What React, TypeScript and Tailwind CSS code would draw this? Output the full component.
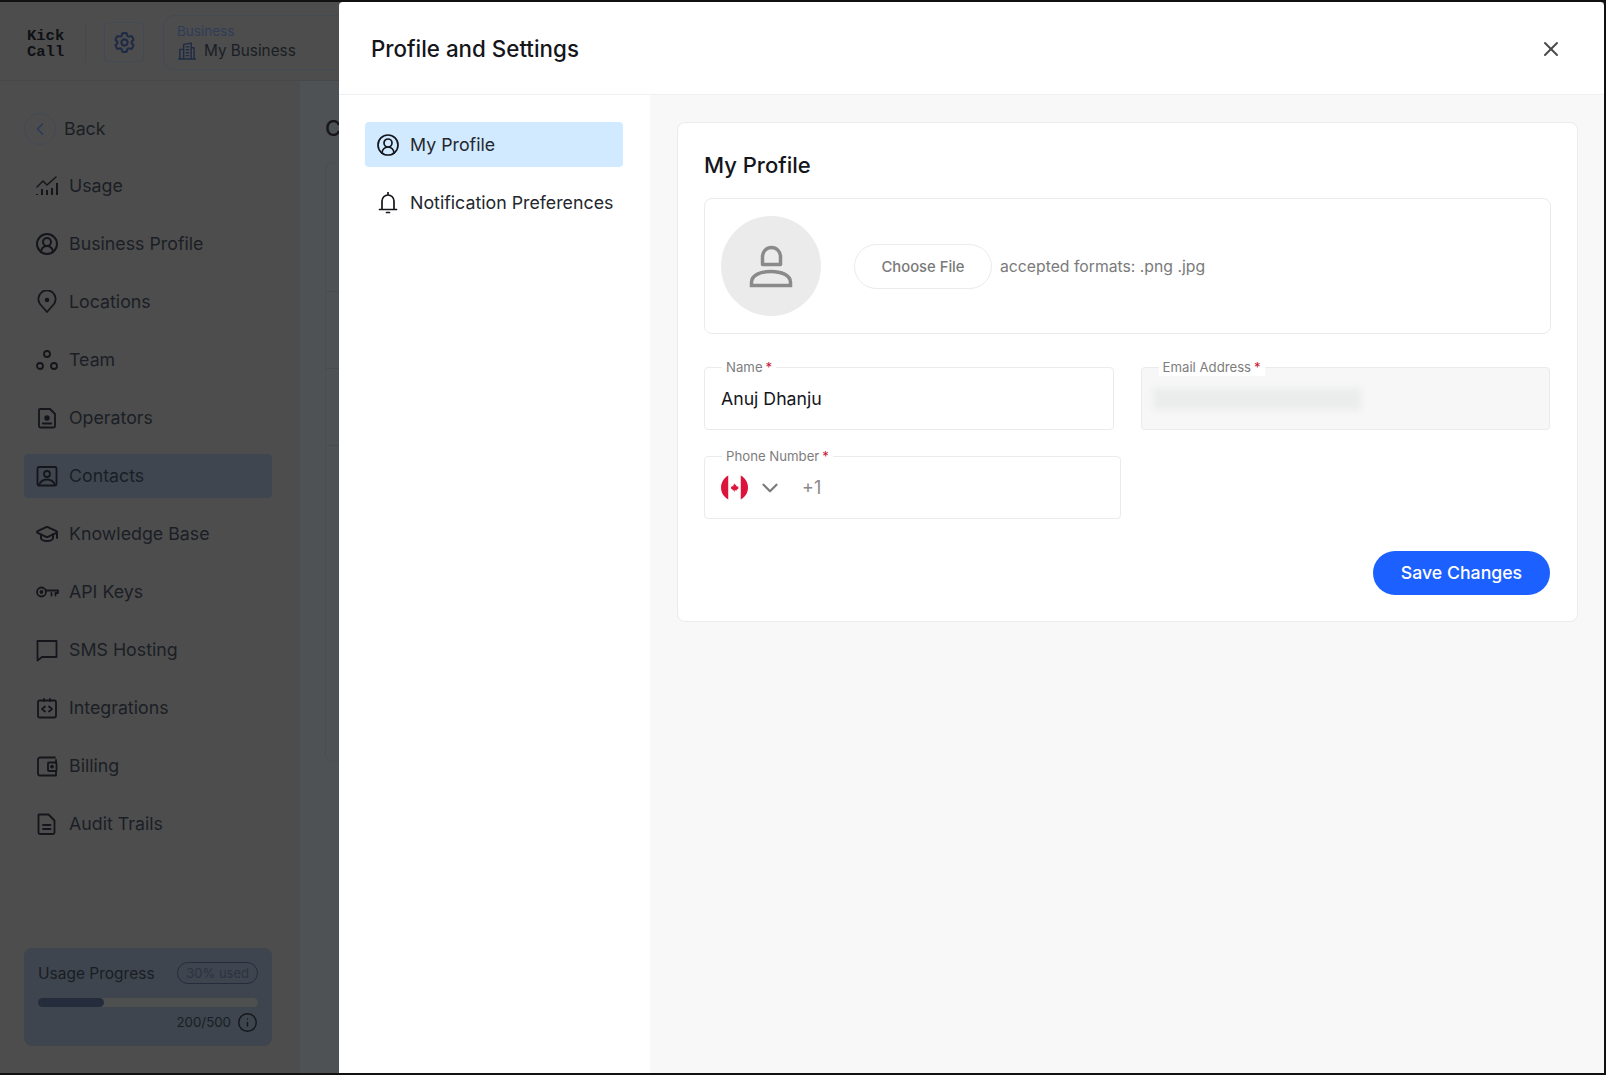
import React from "react";
import { ChevronDown, ChevronLeft, CircleUserRound, GraduationCap, Info, X } from "lucide-react";
import { HiOutlineCog6Tooth } from "react-icons/hi2";

type IconProps = { className?: string };

const Svg = ({ className, children }: IconProps & { children: React.ReactNode }) => (
  <svg
    viewBox="0 0 24 24"
    fill="none"
    stroke="currentColor"
    strokeWidth={1.8}
    strokeLinecap="round"
    strokeLinejoin="round"
    className={className}
  >
    {children}
  </svg>
);

const UsageIcon = ({ className }: IconProps) => (
  <Svg className={className}>
    <path d="M2 13l6-6 4 4 9-8" strokeWidth={1.5} />
    <path d="M2 21v-1M7 21v-6M12 21v-5M17 21v-7M22 21V9" strokeWidth={2} strokeLinecap="butt" />
  </Svg>
);

const PinIcon = ({ className }: IconProps) => (
  <Svg className={className}>
    <path d="M12 22l-7-8a8.600 8.600 0 1 1 14 0z" />
    <circle cx="12" cy="10" r="1.400" fill="currentColor" />
  </Svg>
);

const TeamIcon = ({ className }: IconProps) => (
  <Svg className={className}>
    <circle cx="12" cy="6" r="3" />
    <circle cx="5" cy="18" r="3" />
    <circle cx="19" cy="18" r="3" />
  </Svg>
);

const OperatorIcon = ({ className }: IconProps) => (
  <Svg className={className}>
    <path d="M5 3h10l5 5v12a1.500 1.500 0 0 1-1.500 1.500h-13A1.500 1.500 0 0 1 4 20V4a1 1 0 0 1 1-1z" />
    <circle cx="12" cy="12" r="1.800" fill="currentColor" />
    <path d="M8 17.500h8" strokeWidth={2.200} />
  </Svg>
);

const ContactIcon = ({ className }: IconProps) => (
  <Svg className={className}>
    <rect x="2.500" y="3" width="19" height="18.500" rx="1.500" />
    <circle cx="12" cy="10" r="3" />
    <path d="M4 21c1.500-4 4.500-5.500 8-5.500s6.500 1.500 8 5.500" />
  </Svg>
);

const KeyIcon = ({ className }: IconProps) => (
  <Svg className={className}>
    <circle cx="6.500" cy="12" r="4.500" />
    <circle cx="6.500" cy="12" r="1" fill="currentColor" />
    <path d="M11 10.500h12v2.500h-2.500v2.500M16.500 13v2.500" />
  </Svg>
);

const ChatIcon = ({ className }: IconProps) => (
  <Svg className={className}>
    <path d="M2.500 3h19v16H7l-4.500 3.500z" />
  </Svg>
);

const CodeIcon = ({ className }: IconProps) => (
  <Svg className={className}>
    <rect x="3" y="4.500" width="18" height="17" rx="1.500" />
    <path d="M9 3v2M15 3v2M10 10.500l-3 2.500 3 2.500M14 10.500l3 2.500-3 2.500" />
  </Svg>
);

const WalletIcon = ({ className }: IconProps) => (
  <Svg className={className}>
    <path d="M20 3.500H5A2 2 0 0 0 3 5.500v14a2 2 0 0 0 2 2h16v-4M21 9V6" />
    <rect x="13" y="8.500" width="8.500" height="8.500" rx="1" />
    <circle cx="17" cy="12.700" r="1" fill="currentColor" />
  </Svg>
);

const AuditIcon = ({ className }: IconProps) => (
  <Svg className={className}>
    <path d="M4 2.500h9.500l6 6v12a1.500 1.500 0 0 1-1.500 1.500H5a1.500 1.500 0 0 1-1.500-1.500V3z" />
    <path d="M8 13h7.500M8 17h7.500" />
  </Svg>
);

const BuildingIcon = ({ className }: IconProps) => (
  <Svg className={className}>
    <path d="M8 21.500V4l9-1.500v19M8 10H3.500v11.500M17 8h3.500v13.500M2 21.500h20" strokeWidth={1.700} />
    <path d="M11 7h3M11 10.500h3M11 14h3M11 17.500h3" strokeWidth={1.700} />
  </Svg>
);

const BellIcon = ({ className }: IconProps) => (
  <Svg className={className}>
    <path d="M12 0.500v2.500M6 17V9a6 6 0 0 1 12 0v8M3.500 17.500h17M10.500 20.500h3" strokeWidth={1.700} />
  </Svg>
);

const CanadaFlag = () => (
  <svg viewBox="0 0 28 28" className="h-[27px] w-[27px] shrink-0">
    <defs>
      <clipPath id="flag-clip">
        <circle cx="14" cy="14" r="14" />
      </clipPath>
    </defs>
    <g clipPath="url(#flag-clip)">
      <rect width="28" height="28" fill="#ffffff" />
      <rect width="7.500" height="28" fill="#dc143c" />
      <rect x="20.500" width="7.500" height="28" fill="#dc143c" />
      <path
        d="M14 9.500l.9 1.800.9-.4-.4 2.100 1.100-.7.4.900 1.300-.2-.4 1.400.6.300-2.200 1.700.2.800-1.900-.3v1.600h-.6v-1.600l-1.900.3.200-.8-2.200-1.700.6-.3-.4-1.400 1.300.2.400-.9 1.100.7-.4-2.100.9.400z"
        fill="#dc143c"
      />
    </g>
  </svg>
);

const navItems = [
  { label: "Usage", icon: UsageIcon },
  { label: "Business Profile", icon: CircleUserRound },
  { label: "Locations", icon: PinIcon },
  { label: "Team", icon: TeamIcon },
  { label: "Operators", icon: OperatorIcon },
  { label: "Contacts", icon: ContactIcon, active: true },
  { label: "Knowledge Base", icon: GraduationCap },
  { label: "API Keys", icon: KeyIcon },
  { label: "SMS Hosting", icon: ChatIcon },
  { label: "Integrations", icon: CodeIcon },
  { label: "Billing", icon: WalletIcon },
  { label: "Audit Trails", icon: AuditIcon },
];

const Sidebar = () => (
  <aside className="flex h-full w-[300px] shrink-0 flex-col pb-[27px] pl-6 pr-7 pt-8">
    <div className="flex h-8 items-center gap-2 text-[17.8px] text-[#1b1e25]">
      <span className="flex h-8 w-8 items-center justify-center rounded-full border border-[#434a54]">
        <ChevronLeft className="h-5 w-5 text-[#2a3a58]" strokeWidth={2} />
      </span>
      Back
    </div>
    <nav className="mt-[19px] flex flex-col gap-[14px]">
      {navItems.map((item) => (
        <div
          key={item.label}
          className={`flex h-11 items-center gap-[10px] rounded-[4px] px-[11px] text-[17.8px] text-[#1b1e25] ${
            item.active ? "bg-[#3f4650]" : ""
          }`}
        >
          <item.icon className="h-6 w-6 shrink-0 text-[#14161b]" />
          {item.label}
        </div>
      ))}
    </nav>
    <div className="mt-auto rounded-lg bg-[#3e454e] px-[14px] pb-[13px] pt-[14px]">
      <div className="flex items-center justify-between">
        <span className="text-[15.500px] text-[#1a1d24]">Usage Progress</span>
        <span className="rounded-full border border-[#252c3c] px-2 text-[13px] leading-[20px] text-[#2c3342]">
          30% used
        </span>
      </div>
      <div className="mt-[13px] h-[9px] w-full rounded-full bg-[#4e4f4f]">
        <div className="h-full w-[30%] rounded-full bg-[#252c3c]" />
      </div>
      <div className="mt-[5px] flex items-center justify-end gap-[6px] text-[13.300px] text-[#1a1d24]">
        200/500
        <Info className="h-[21px] w-[21px] text-[#14161b]" strokeWidth={1.600} />
      </div>
    </div>
  </aside>
);

const TopBar = () => (
  <header className="flex h-[79px] shrink-0 items-center border-b border-[#474849] pl-[27px] pt-[2px]">
    <div className="mt-[3px] w-[40px] font-['Liberation_Mono',monospace] text-[15.500px] font-bold leading-[16px] text-[#0f1115]">
      Kick Call
    </div>
    <div className="ml-[18px] h-10 border-l border-[#464749]" />
    <div className="ml-[18px] flex h-10 w-10 items-center justify-center rounded-[4px] border border-[#434a54]">
      <HiOutlineCog6Tooth className="h-[25px] w-[25px] text-[#1f2a44]" strokeWidth={2} />
    </div>
    <div className="ml-[19px] flex h-[55px] w-[200px] shrink-0 flex-col justify-center rounded-xl border border-[#434a54] pl-[13px]">
      <span className="text-[13.500px] leading-[18px] text-[#2f3c58]">Business</span>
      <span className="flex items-center gap-[7px] text-[15.300px] leading-[22px] text-[#1a1d24]">
        <BuildingIcon className="h-5 w-5 text-[#1f2a44]" />
        My Business
      </span>
    </div>
  </header>
);

const Background = () => (
  <div className="flex h-full flex-col bg-[#4d4d4d]">
    <TopBar />
    <div className="flex min-h-0 flex-1">
      <Sidebar />
      <main className="flex-1 bg-[#4f5254] pl-[25px] pt-8">
        <h1 className="text-[22px] font-medium leading-[30px] text-[#14161b]">Contacts</h1>
        <div className="mt-[19px] flex h-[600px] flex-col divide-y divide-[#484c52] rounded-lg border border-[#4a4d51] pt-[52px]">
          <div className="h-[77px]" />
          <div className="h-[77px]" />
          <div className="h-[77px]" />
          <div className="h-[77px]" />
        </div>
      </main>
    </div>
  </div>
);

const Field = ({
  label,
  disabled,
  className,
  children,
}: {
  label: string;
  disabled?: boolean;
  className?: string;
  children: React.ReactNode;
}) => (
  <div
    className={`relative flex h-[63px] items-center rounded-[4px] border border-[#ebebeb] px-4 ${
      disabled ? "bg-[#f7f7f7]" : "bg-white"
    } ${className ?? ""}`}
  >
    <label className="absolute -top-[10px] left-[17px] bg-white px-1 text-[13.200px] leading-[18px] text-[#7d7d7d]">
      {label}
      <span className="ml-[3px] text-[#c8102e]">*</span>
    </label>
    {children}
  </div>
);

const ProfileCard = () => (
  <section className="rounded-lg border border-[#ececec] bg-white p-[26px]">
    <h2 className="text-[22px] font-medium leading-8 text-[#14161b]">My Profile</h2>

    <div className="mt-[17px] flex h-[136px] items-center gap-[33px] rounded-lg border border-[#ebebeb] px-4">
      <div className="flex h-[100px] w-[100px] items-center justify-center rounded-full bg-[#ebebeb]">
        <svg viewBox="0 0 48 48" fill="none" stroke="#8a8a8a" strokeWidth={3.500} className="h-12 w-12">
          <path d="M15.500 22.500V14.500a9 9 0 0 1 18 0v8z" strokeLinejoin="round" />
          <path d="M4.500 43.500v-3C4.500 33 14 29.500 24 29.500S43.500 33 43.500 40.500v3z" />
        </svg>
      </div>
      <div className="flex items-center gap-2">
        <button className="h-[45px] w-[138px] rounded-full border border-[#ebebeb] bg-white pt-[2px] text-[14.800px] font-medium text-[#7a7a7a]">
          Choose File
        </button>
        <span className="pt-[2px] text-[15.750px] text-[#7a7a7a]">accepted formats: .png .jpg</span>
      </div>
    </div>

    <div className="mt-[33px] grid grid-cols-2 gap-[27px] pr-px">
      <Field label="Name">
        <span className="pt-[2px] text-[17.700px] text-[#14161b]">Anuj Dhanju</span>
      </Field>
      <Field label="Email Address" disabled>
        <div className="-ml-[5px] h-[22px] w-[208px] bg-[#ebecec] blur-[3px]" />
      </Field>
    </div>

    <Field label="Phone Number" className="mt-[26px] w-[417px]">
      <CanadaFlag />
      <ChevronDown className="ml-[9px] h-[26px] w-[26px] text-[#7a7a7a]" strokeWidth={2} />
      <span className="ml-[19px] text-[18px] text-[#8a8a8a]">+1</span>
    </Field>

    <div className="mt-8 flex justify-end pr-px">
      <button className="h-11 w-[177px] rounded-full bg-[#1c60ff] text-[17.700px] font-medium text-white">
        Save Changes
      </button>
    </div>
  </section>
);

const SettingsModal = () => (
  <div className="absolute bottom-0 left-[339px] right-0 top-0 flex flex-col rounded-t-[4px] bg-white">
    <div className="flex h-[93px] shrink-0 items-center justify-between border-b border-[#f0f0f0] pl-[32px] pr-[41px] pt-[2px]">
      <h2 className="text-[22.350px] font-medium text-[#14161b]">Profile and Settings</h2>
      <X className="h-6 w-6 text-[#4a4a4a]" />
    </div>
    <div className="flex min-h-0 flex-1">
      <div className="flex w-[311px] shrink-0 flex-col gap-[14px] pl-[26px] pr-[27px] pt-[27px]">
        <div className="flex h-[45px] items-center gap-[10px] rounded-[4px] bg-[#d2eaff] px-[11px] text-[17.800px] text-[#24272e]">
          <CircleUserRound className="h-6 w-6 shrink-0 text-[#14161b]" strokeWidth={1.700} />
          <span className="pt-[2px]">My Profile</span>
        </div>
        <div className="flex h-[45px] items-center gap-[10px] whitespace-nowrap px-[11px] text-[17.800px] text-[#24272e]">
          <BellIcon className="h-6 w-6 shrink-0 text-[#14161b]" />
          Notification Preferences
        </div>
      </div>
      <div className="flex-1 bg-[#f8f8f8] pl-[27px] pr-[26px] pt-[27px]">
        <ProfileCard />
      </div>
    </div>
  </div>
);

export default function App() {
  return (
    <div className="box-border h-screen w-screen overflow-hidden border-y-2 border-r-2 border-[#111111] bg-[#4d4d4d] font-['Inter',sans-serif]">
      <div className="relative h-full overflow-hidden">
        <Background />
        <SettingsModal />
      </div>
    </div>
  );
}
